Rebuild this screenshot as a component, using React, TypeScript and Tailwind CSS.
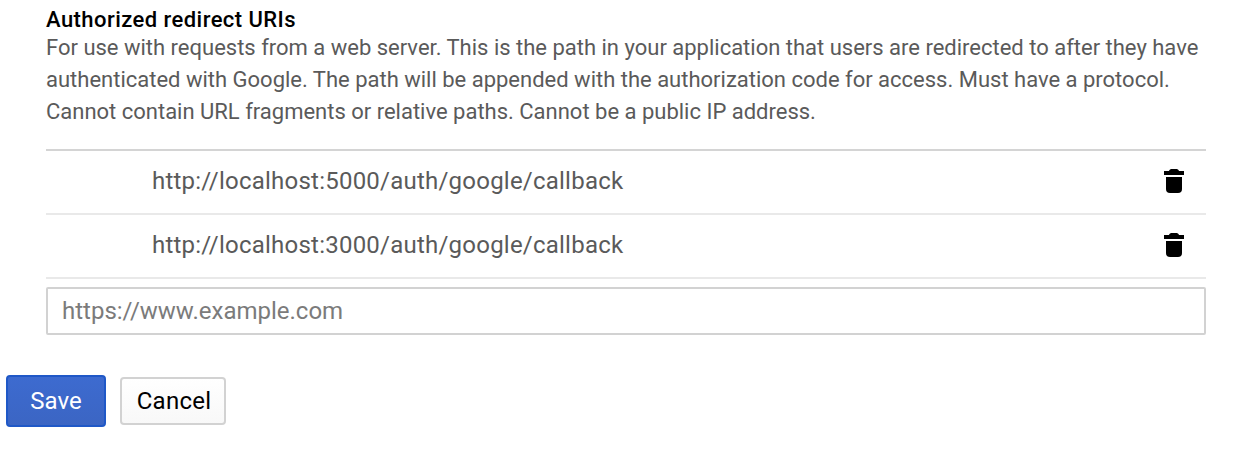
const uris = [
  'http://localhost:5000/auth/google/callback',
  'http://localhost:3000/auth/google/callback',
];

function TrashIcon() {
  return (
    <svg className="h-6 w-5" viewBox="0 0 20 24" fill="#000">
      <path d="M0 2h5C5.500.6 6.600 0 8 0h4c1.400 0 2.500.6 3 2h5v4H0z" />
      <path d="M2 8h16v12a4 4 0 0 1-4 4H6a4 4 0 0 1-4-4z" />
    </svg>
  );
}

export default function App() {
  return (
    <main className="h-[457px] w-[1237px] overflow-hidden bg-white pt-2 font-['Roboto',sans-serif]">
      <section className="mx-[46px] w-[1160px]">
        <h2 className="h-6 text-[22px] leading-6 font-medium tracking-[0.02em] whitespace-nowrap text-black">
          Authorized redirect URIs
        </h2>
        <p className="text-[22px] leading-8 tracking-[-0.004px] whitespace-nowrap text-[#5a5a5a]">
          For use with requests from a web server. This is the path in your application that users are redirected to after they have
          <br />
          authenticated with Google. The path will be appended with the authorization code for access. Must have a protocol.
          <br />
          Cannot contain URL fragments or relative paths. Cannot be a public IP address.
        </p>
        <ul className="mt-[21px] border-t-2 border-[#d4d4d4]">
          {uris.map((uri) => (
            <li key={uri} className="flex h-16 items-center justify-between border-b-2 border-[#e9e9e9] pr-[22px] pb-0.5 pl-[106px] text-2xl tracking-[0.0095em] text-[#5a5a5a]">
              <span>{uri}</span>
              <button aria-label="Delete URI"><TrashIcon /></button>
            </li>
          ))}
        </ul>
        <input
          className="mt-2 block h-12 w-full rounded-[2px] border-2 border-[#d2d2d2] px-3.5 text-2xl outline-none placeholder:text-[#7b7b7b]"
          placeholder="https://www.example.com"
        />
      </section>
      <div className="mt-10 ml-1.5 flex items-center gap-3.5 text-2xl">
        <button className="h-[52px] w-[100px] rounded border-2 border-[#1f58c7] bg-[#3c68cb] bg-linear-to-b from-[#3d6bd0] to-[#3b65c3] bg-origin-border text-white">Save</button>
        <button className="h-12 w-[106px] rounded border-2 border-[#d2d2d2] bg-linear-to-b from-white to-[#f8f8f8] bg-origin-border pl-0.5 tracking-[0.01em] text-black">Cancel</button>
      </div>
    </main>
  );
}
